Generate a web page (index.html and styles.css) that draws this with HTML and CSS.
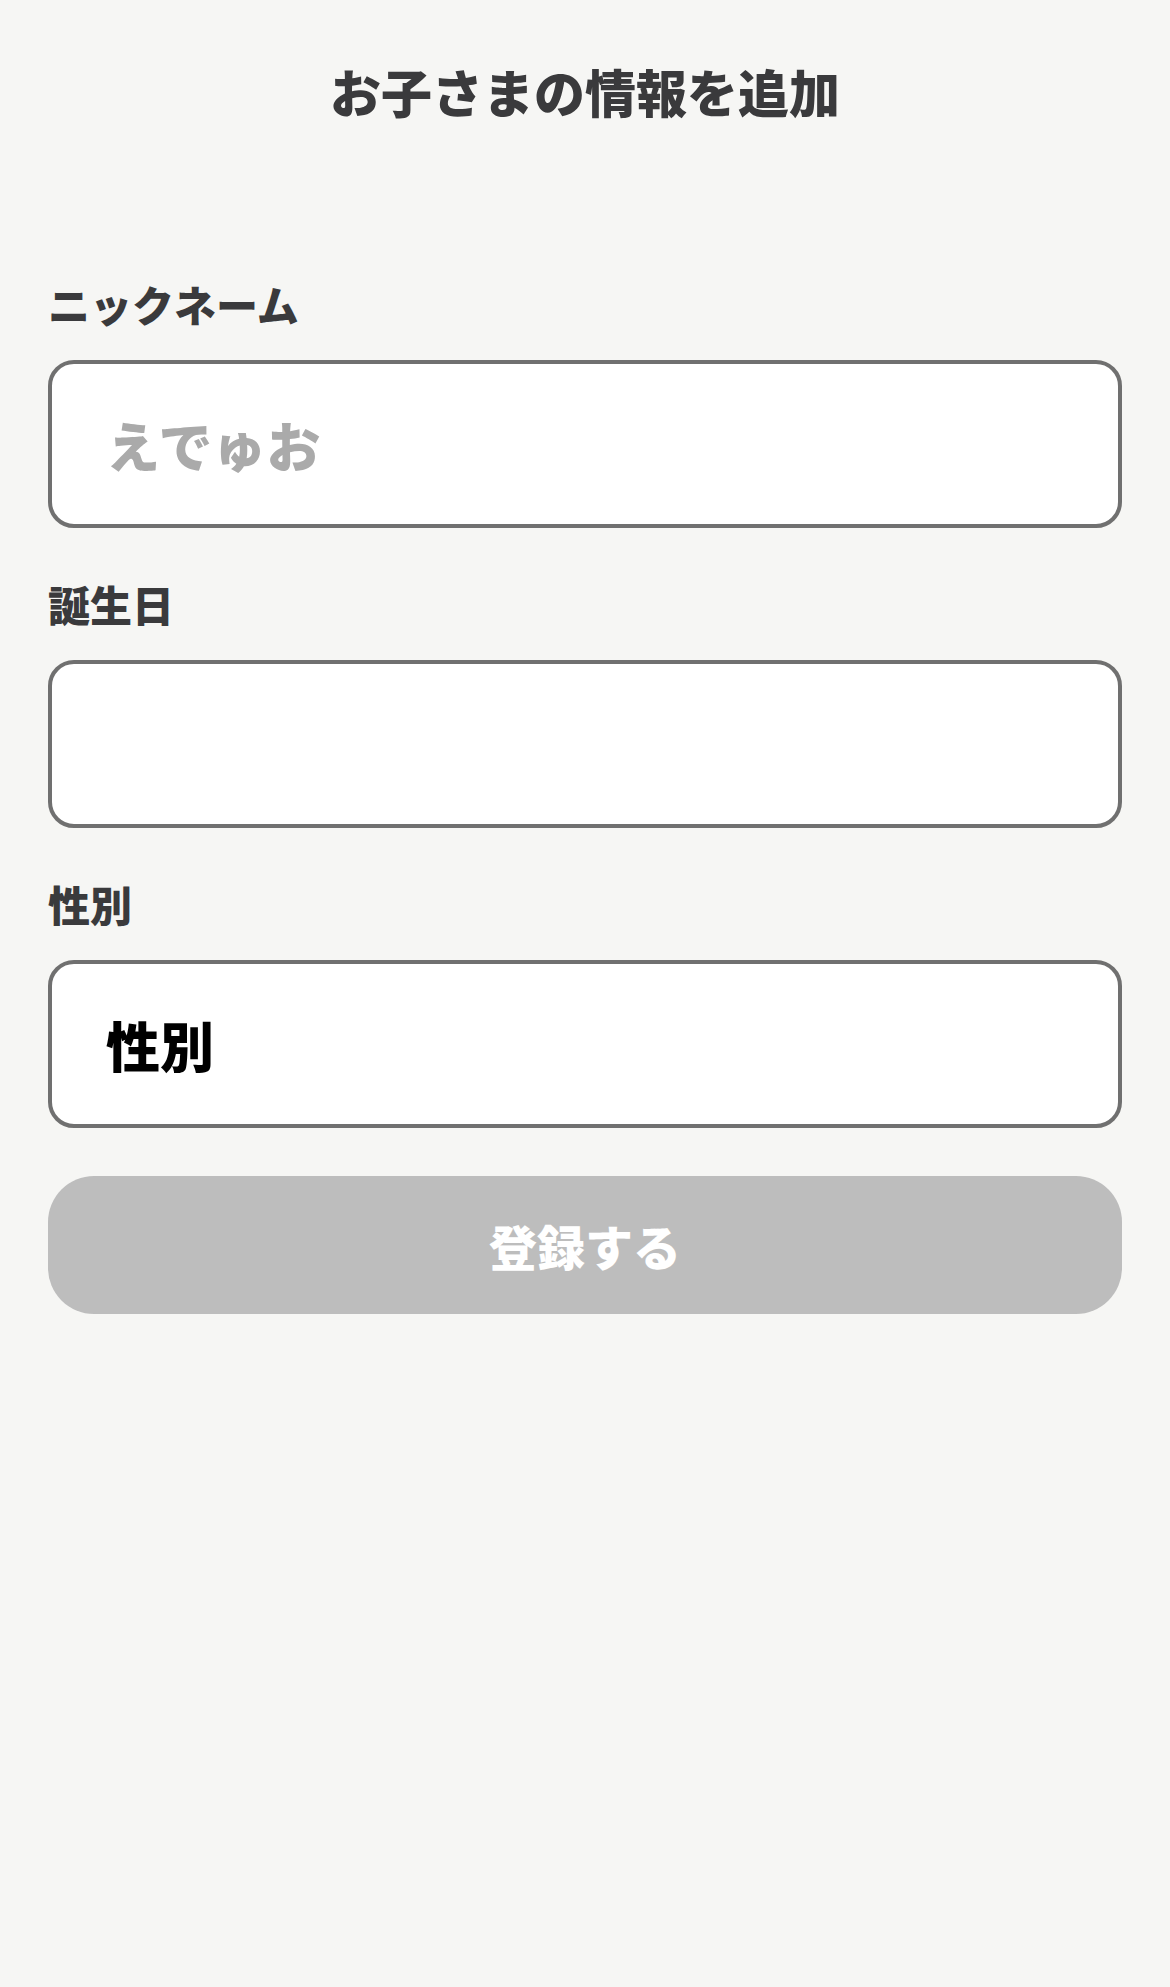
FILE: index.html
```html
<!DOCTYPE html>
<html lang="ja">
<head>
<meta charset="utf-8">
<title>お子さまの情報を追加</title>
<link rel="stylesheet" href="styles.css">
</head>
<body>
<main class="page">
  <h1 class="title">お子さまの情報を追加</h1>
  <form class="form">
    <div class="field">
      <label class="label" for="nick">ニックネーム</label>
      <input class="box input" id="nick" type="text" placeholder="えでゅお">
    </div>
    <div class="field">
      <label class="label" for="birth">誕生日</label>
      <div class="box" id="birth"></div>
    </div>
    <div class="field">
      <label class="label">性別</label>
      <div class="box select">性別</div>
    </div>
    <button class="submit" type="button">登録する</button>
  </form>
</main>
</body>
</html>
```
FILE: styles.css
```css
html, body {
  margin: 0;
  padding: 0;
}
body {
  background: #f6f6f4;
  font-family: "Noto Sans CJK JP", "Noto Sans", sans-serif;
  color: #3a3a3c;
}
.page {
  padding: 66px 48px 0;
}
.title {
  margin: 0;
  font-size: 51px;
  line-height: 51px;
  font-weight: 900;
  text-align: center;
  color: #3a3a3c;
}
.form {
  margin-top: 166px;
  display: flex;
  flex-direction: column;
}
.field {
  display: flex;
  flex-direction: column;
}
.field + .field {
  margin-top: 55px;
}
.label {
  font-size: 42px;
  line-height: 42px;
  font-weight: 900;
  color: #3a3a3c;
  margin-bottom: 35px;
}
.box {
  box-sizing: border-box;
  width: 100%;
  height: 168px;
  border: 4.5px solid #707070;
  border-radius: 26px;
  background: #fff;
  margin: 0;
  padding: 0 54px;
  display: flex;
  align-items: center;
  font-family: "Noto Sans CJK JP", "Noto Sans", sans-serif;
  font-size: 54px;
  font-weight: 900;
  color: #000;
}
.input {
  appearance: none;
  outline: none;
}
.input::placeholder {
  color: #aaaaaa;
  opacity: 1;
}
.select {
  color: #000;
}
.submit {
  margin-top: 48px;
  height: 138px;
  border: none;
  border-radius: 46px;
  background: #bdbdbd;
  color: #fff;
  font-family: "Noto Sans CJK JP", "Noto Sans", sans-serif;
  font-size: 48px;
  font-weight: 900;
  padding: 0;
}
```
